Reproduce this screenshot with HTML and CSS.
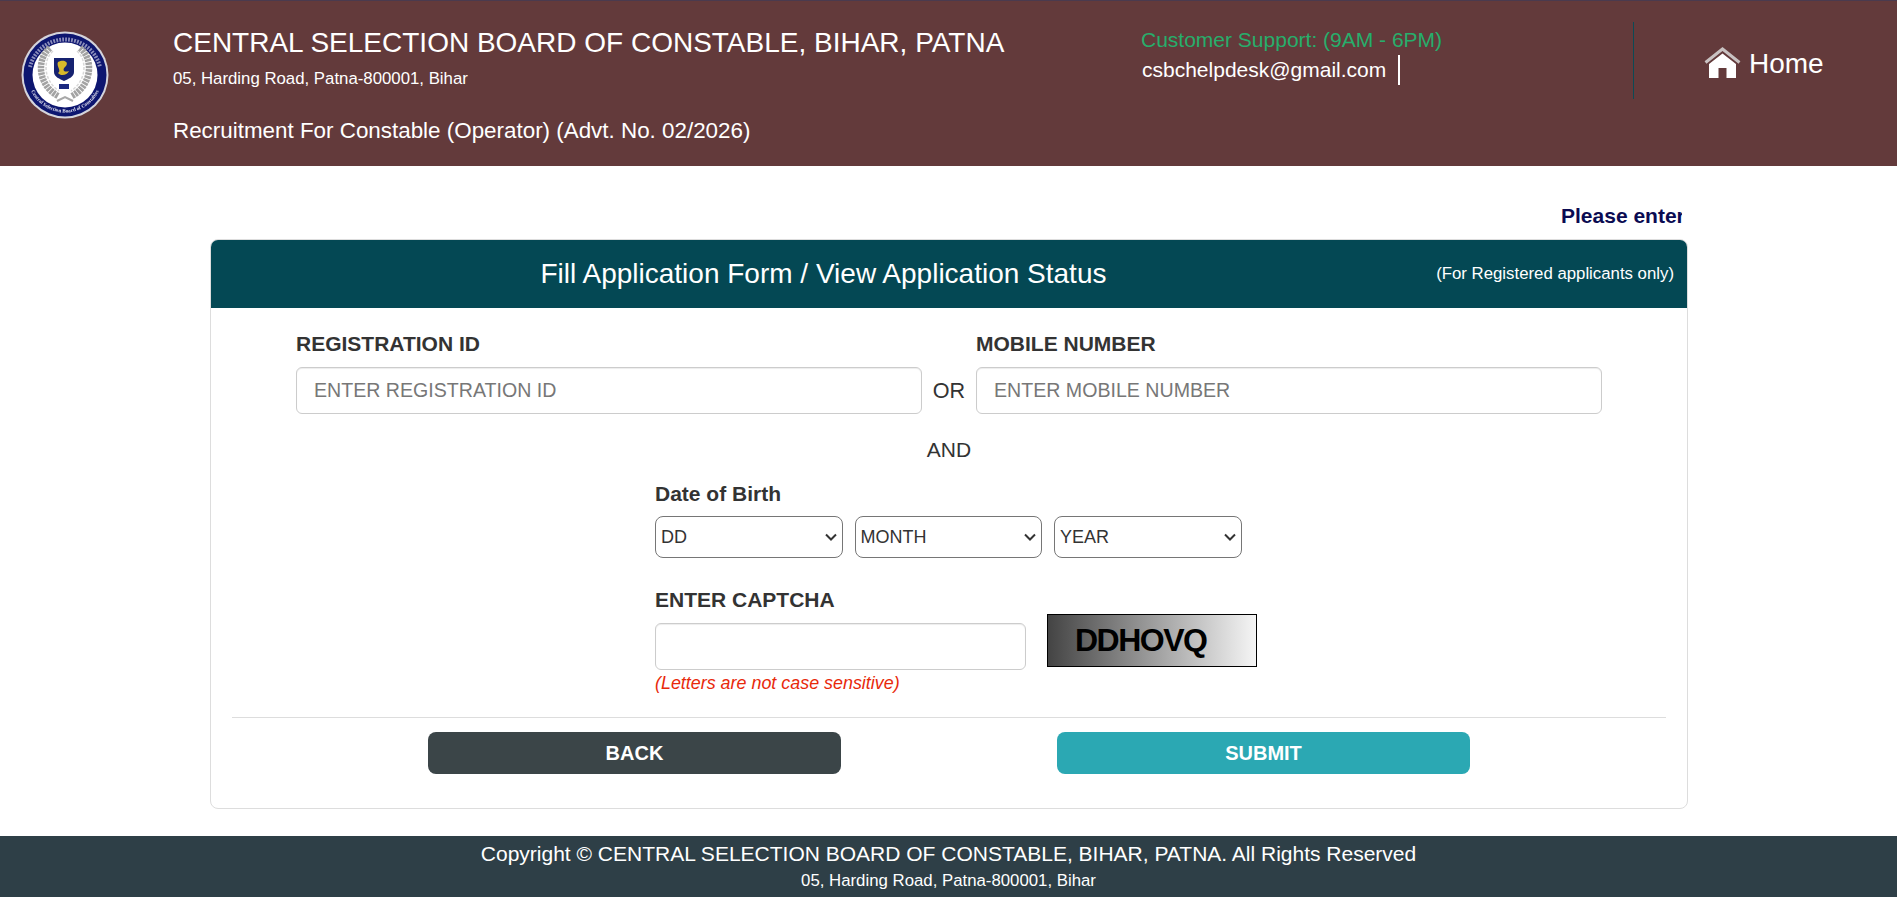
FILE: index.html
```html
<!DOCTYPE html>
<html lang="en">
<head>
<meta charset="utf-8">
<title>Fill Application Form</title>
<link rel="stylesheet" href="styles.css">
</head>
<body>
<header class="topbar">
  <svg class="logo" viewBox="0 0 88 88" aria-label="Central Selection Board of Constable emblem">
    <defs>
      <path id="ring-low" d="M6.500 44a37.500 37.500 0 0 0 75 0"/>
      <filter id="soft" x="-5%" y="-5%" width="110%" height="110%"><feGaussianBlur stdDeviation=".35"/></filter>
    </defs>
    <g filter="url(#soft)">
      <circle cx="44" cy="44" r="43.500" fill="#d4d4dc"/>
      <circle cx="44" cy="44" r="41.500" fill="#0d1570"/>
      <path d="M9 36A36 36 0 0 1 79 36" fill="none" stroke="#dfe0ee" stroke-width="4" stroke-dasharray="1.800 1.200" opacity=".6"/>
      <text class="logo-ring-text"><textPath href="#ring-low" startOffset="50%" text-anchor="middle">Central Selection Board of Constables</textPath></text>
      <circle cx="44" cy="44" r="32.500" fill="#fff"/>
      <g fill="none" stroke="#a3a3a3" stroke-width="6.500" stroke-dasharray="2.600 .8">
        <path d="M29 17C15 28 17 54 37 65"/>
        <path d="M59 17C73 28 71 54 51 65"/>
      </g>
      <g fill="none" stroke="#d9d9d9" stroke-width="1.500" stroke-dasharray="3 1.500">
        <path d="M32 20C21 30 23 50 38 60"/>
        <path d="M56 20C67 30 65 50 50 60"/>
      </g>
      <path d="M33 27H53V41C53 46 47 48 43 50 39 48 33 46 33 41Z" fill="#17206f"/>
      <path d="M37 31C43 28 48 31 45 35 41 38 42 42 48 40 46 45 39 45 37 42 41 40 35 35 37 31Z" fill="#d8b92c"/>
      <rect x="38" y="53" width="10" height="5" fill="#1c2a80"/>
      <path d="M36 70L44 66 52 70" fill="none" stroke="#a8a8a8" stroke-width="2"/>
    </g>
  </svg>
  <div class="org">
    <h1 class="org-name">CENTRAL SELECTION BOARD OF CONSTABLE, BIHAR, PATNA</h1>
    <p class="org-address">05, Harding Road, Patna-800001, Bihar</p>
    <p class="org-advt">Recruitment For Constable (Operator) (Advt. No. 02/2026)</p>
  </div>
  <div class="support">
    <p class="support-hours">Customer Support: (9AM - 6PM)</p>
    <p class="support-mail"><span>csbchelpdesk@gmail.com</span><i class="caret"></i></p>
  </div>
  <a class="home" href="#">
    <svg class="home-icon" viewBox="0 0 37 31" aria-hidden="true">
      <path d="M1.500 15.500L18.500 2 35.500 15.500" fill="none" stroke="#c9c2c2" stroke-width="3"/>
      <path d="M18.500 6.500L32 17V31H22.500V21H14.500V31H5V17Z" fill="#fff"/>
    </svg>
    <span>Home</span>
  </a>
</header>

<main class="page">
  <div class="ticker"><b>Please enter</b></div>
  <section class="card">
    <div class="card-head">
      <h2 class="card-title">Fill Application Form / View Application Status</h2>
      <p class="card-note">(For Registered applicants only)</p>
    </div>
    <form class="card-body">
      <div class="id-row">
        <div class="field">
          <label class="label">REGISTRATION ID</label>
          <input class="input" type="text" placeholder="ENTER REGISTRATION ID">
        </div>
        <span class="or">OR</span>
        <div class="field">
          <label class="label">MOBILE NUMBER</label>
          <input class="input" type="text" placeholder="ENTER MOBILE NUMBER">
        </div>
      </div>
      <p class="and">AND</p>
      <div class="lower">
        <label class="label">Date of Birth</label>
        <div class="dob">
          <select class="select"><option>DD</option></select>
          <select class="select"><option>MONTH</option></select>
          <select class="select"><option>YEAR</option></select>
        </div>
        <label class="label captcha-label">ENTER CAPTCHA</label>
        <div class="captcha-row">
          <div class="captcha-field">
            <input class="input" type="text">
            <p class="hint">(Letters are not case sensitive)</p>
          </div>
          <div class="captcha">DDHOVQ</div>
        </div>
      </div>
      <div class="actions">
        <button class="btn btn-back" type="button">BACK</button>
        <button class="btn btn-submit" type="button">SUBMIT</button>
      </div>
    </form>
  </section>
</main>

<footer class="footer">
  <p class="copy">Copyright © CENTRAL SELECTION BOARD OF CONSTABLE, BIHAR, PATNA. All Rights Reserved</p>
  <p class="copy-address">05, Harding Road, Patna-800001, Bihar</p>
</footer>
</body>
</html>
```

FILE: styles.css
```css
* { box-sizing: border-box; }
html, body { margin: 0; height: 100%; }
body {
  font-family: "Liberation Sans", Arial, sans-serif;
  color: #333;
  background: #fff;
  overflow: hidden;
}
p, h1, h2 { margin: 0; font-weight: 400; }

.topbar {
  display: flex;
  height: 166px;
  background: #633a3b;
  border-top: 1px solid #4a3a4e;
  color: #fff;
}
.logo { width: 88px; height: 88px; margin: 30px 0 0 21px; flex: none; }
.logo-ring-text { font-size: 5.200px; font-weight: 700; fill: #dfe0ee; font-family: "Liberation Serif", serif; }
.org { width: 968px; margin-left: 64px; padding-top: 25px; flex: none; }
.org-name { font-size: 28px; line-height: 34px; }
.org-address { font-size: 16.800px; line-height: 20px; margin-top: 9px; }
.org-advt { font-size: 22.400px; line-height: 24px; margin-top: 30px; }

.support { width: 493px; height: 77px; margin-top: 21px; padding-top: 6px; flex: none; border-right: 1px solid #0c4a55; }
.support-hours { color: #27ae6b; font-size: 21px; line-height: 24px; }
.support-mail { display: flex; align-items: center; font-size: 21px; line-height: 30px; margin-top: 3px; padding-left: 1px; }
.caret { width: 2px; height: 30px; background: #fff; margin-left: 12px; }

.home {
  display: flex;
  align-items: center;
  gap: 8px;
  color: #fff;
  text-decoration: none;
  font-size: 28px;
  height: 34px;
  margin: 46px 0 0 70px;
}
.home-icon { width: 37px; height: 31px; margin-top: -4px; }

.page { width: 1478px; margin-left: 210px; padding-top: 38px; }
.ticker {
  width: 1472px;
  height: 35px;
  overflow: hidden;
  padding-left: 1351px;
  white-space: nowrap;
  font-size: 21px;
  line-height: 24px;
  color: #0b0b52;
}
.ticker b { font-weight: 700; }

.card {
  height: 570px;
  border: 1px solid #ddd;
  border-radius: 8px;
  overflow: hidden;
}
.card-head {
  display: grid;
  grid-template-columns: 1225px 1fr;
  align-items: center;
  height: 68px;
  background: #044854;
  color: #fff;
}
.card-title { font-size: 28px; text-align: center; }
.card-note { font-size: 16.800px; text-align: right; padding-right: 13px; }

.card-body { padding: 0 21px; }
.id-row {
  display: flex;
  align-items: flex-end;
  gap: 10px;
  padding: 24px 64px 0;
}
.field { flex: 1; }
.label { display: block; font-size: 21px; font-weight: 700; line-height: 24px; }
.or { flex: none; width: 34px; font-size: 21.600px; line-height: 47px; text-align: center; }
.input {
  display: block;
  width: 100%;
  height: 47px;
  margin-top: 11px;
  padding: 0 17px;
  font: 19.600px "Liberation Sans", Arial, sans-serif;
  color: #555;
  background: #fff;
  border: 1px solid #ccc;
  border-radius: 6px;
  box-shadow: inset 0 1px 1px rgba(0, 0, 0, .075);
}
.input::placeholder { color: #777; opacity: 1; }
.and { font-size: 21px; line-height: 24px; text-align: center; margin-top: 24px; }

.lower { margin: 20px 0 0 423px; }
.dob { display: flex; gap: 12px; margin-top: 10px; }
.select {
  appearance: none;
  width: 187.500px;
  height: 42px;
  padding: 0 24px 0 5px;
  font: 18px "Liberation Sans", Arial, sans-serif;
  color: #333;
  background: #fff url("data:image/svg+xml,%3Csvg xmlns='http://www.w3.org/2000/svg' width='14' height='10' viewBox='0 0 14 10'%3E%3Cpath d='M2 2.500L7 7.500 12 2.500' fill='none' stroke='%23333' stroke-width='2'/%3E%3C/svg%3E") no-repeat right 4px center;
  border: 1px solid #767676;
  border-radius: 8px;
}
.captcha-label { margin-top: 30px; }
.captcha-row { display: flex; align-items: flex-start; gap: 21px; }
.captcha-field { width: 371px; }
.hint { color: #e8290b; font-size: 17.900px; font-style: italic; line-height: 20px; margin-top: 3px; }
.captcha {
  width: 210px;
  height: 53px;
  margin-top: 2px;
  border: 1px solid #000;
  background: linear-gradient(90deg, #444, #f5f5f5);
  color: #000;
  font-size: 32px;
  font-weight: 700;
  letter-spacing: -1.500px;
  line-height: 50px;
  padding-left: 27px;
}

.actions {
  display: flex;
  justify-content: center;
  gap: 216px;
  margin-top: 24px;
  padding-top: 14px;
  border-top: 1px solid #ddd;
}
.btn {
  width: 413px;
  height: 42px;
  border: 0;
  border-radius: 8px;
  color: #fff;
  font: 700 20px "Liberation Sans", Arial, sans-serif;
}
.btn-back { background: #3b4548; }
.btn-submit { background: #2ba8b3; }

.footer {
  height: 61px;
  margin-top: 27px;
  background: #2e3f47;
  color: #fff;
  text-align: center;
  padding-top: 6px;
}
.copy { font-size: 21px; line-height: 24px; }
.copy-address { font-size: 16.800px; line-height: 20px; margin-top: 5px; }
```
